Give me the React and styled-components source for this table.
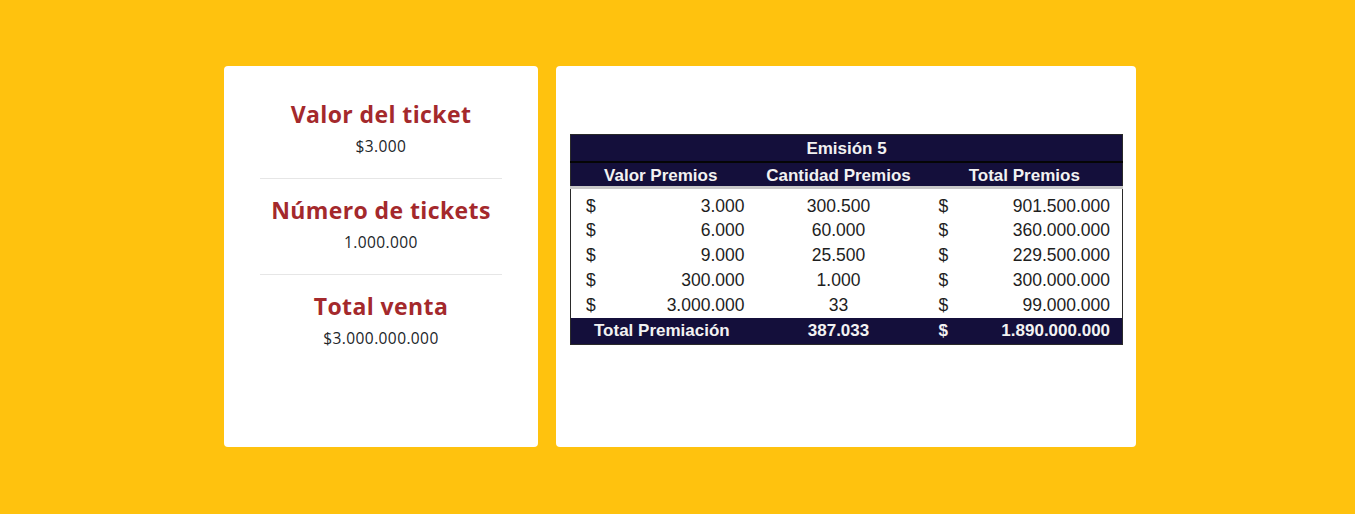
import React from 'react';
import styled, { createGlobalStyle } from 'styled-components';

const GlobalStyle = createGlobalStyle`
  html, body {
    margin: 0;
    padding: 0;
    background: #ffc20e;
  }
  body {
    font-family: "Open Sans", "DejaVu Sans", sans-serif;
  }
`;

const Page = styled.div`
  min-height: 514px;
  box-sizing: border-box;
  padding: 66px 0 0 5px;
  display: flex;
  justify-content: center;
  align-items: flex-start;
  gap: 18px;
`;

const Card = styled.div`
  background: #fff;
  border-radius: 4px;
  width: ${(p) => p.$width}px;
  height: 381px;
  box-sizing: border-box;
`;

const InfoCard = styled(Card)`
  padding: 33px 36px 0;
  display: flex;
  flex-direction: column;
  align-items: stretch;
  text-align: center;
`;

const Section = styled.div`
  padding: 0 0 22px;
  & + & {
    border-top: 1px solid #e6e6e6;
    padding-top: 16px;
  }
`;

const Title = styled.h3`
  margin: 0;
  font-size: 23px;
  line-height: 30px;
  font-weight: 700;
  letter-spacing: 0.4px;
  color: #a4292c;
`;

const Value = styled.p`
  margin: 7px 0 0;
  font-size: 15.5px;
  line-height: 20px;
  letter-spacing: 0.4px;
  color: #212529;
`;

const TableCard = styled(Card)`
  padding: 68px 14px 0;
`;

const Table = styled.table`
  width: 552px;
  border-collapse: collapse;
  font-family: "Liberation Sans", Arial, sans-serif;
  font-size: 17.5px;
  color: #1e1e1e;
  border: 1px solid #2a2a2a;
  table-layout: fixed;
`;

const HeadRow = styled.tr`
  background: #140f3b;
  color: #f2f2f2;
  height: ${(p) => p.$h}px;
  border-bottom: ${(p) => p.$line || 'none'};
`;

const Th = styled.th`
  font-weight: 700;
  font-size: 17px;
  padding: 3px 0 0;
  text-align: center;
`;

const Row = styled.tr`
  height: ${(p) => p.$h || 25}px;
  background: #fff;
`;

const Cell = styled.td`
  padding: ${(p) => p.$pt || 0}px ${(p) => p.$pr || 0}px 0 ${(p) => p.$pl || 0}px;
  text-align: ${(p) => p.$align || 'left'};
  white-space: nowrap;
`;

const TotalRow = styled.tr`
  height: 27px;
  background: #140f3b;
  color: #f2f2f2;
  font-weight: 700;
  font-size: 17px;
`;

const info = [
  { title: 'Valor del ticket', value: '$3.000' },
  { title: 'Número de tickets', value: '1.000.000' },
  { title: 'Total venta', value: '$3.000.000.000' },
];

const rows = [
  ['3.000', '300.500', '901.500.000'],
  ['6.000', '60.000', '360.000.000'],
  ['9.000', '25.500', '229.500.000'],
  ['300.000', '1.000', '300.000.000'],
  ['3.000.000', '33', '99.000.000'],
];

export default function App() {
  return (
    <>
      <GlobalStyle />
      <Page>
        <InfoCard $width={314}>
          {info.map((item) => (
            <Section key={item.title}>
              <Title>{item.title}</Title>
              <Value>{item.value}</Value>
            </Section>
          ))}
        </InfoCard>
        <TableCard $width={580}>
          <Table>
            <colgroup>
              <col style={{ width: 30 }} />
              <col style={{ width: 150 }} />
              <col style={{ width: 176 }} />
              <col style={{ width: 34 }} />
              <col style={{ width: 162 }} />
            </colgroup>
            <thead>
              <HeadRow $h={27} $line="2px solid #050505">
                <Th colSpan={5}>Emisión 5</Th>
              </HeadRow>
              <HeadRow $h={26} $line="3px solid #c8c8c8">
                <Th colSpan={2}>Valor Premios</Th>
                <Th>Cantidad Premios</Th>
                <Th colSpan={2}>Total Premios</Th>
              </HeadRow>
            </thead>
            <tbody>
              {rows.map(([v, c, t], i) => {
                const pt = i === 0 ? 6 : 0;
                return (
                  <Row key={v} $h={i === 0 ? 30 : 25}>
                    <Cell $pt={pt} $pl={15}>$</Cell>
                    <Cell $pt={pt} $align="right" $pr={6}>{v}</Cell>
                    <Cell $pt={pt} $align="center">{c}</Cell>
                    <Cell $pt={pt} $pl={12}>$</Cell>
                    <Cell $pt={pt} $align="right" $pr={12}>{t}</Cell>
                  </Row>
                );
              })}
              <TotalRow>
                <Cell colSpan={2} $pl={23}>Total Premiación</Cell>
                <Cell $align="center">387.033</Cell>
                <Cell $pl={12}>$</Cell>
                <Cell $align="right" $pr={12}>1.890.000.000</Cell>
              </TotalRow>
            </tbody>
          </Table>
        </TableCard>
      </Page>
    </>
  );
}
